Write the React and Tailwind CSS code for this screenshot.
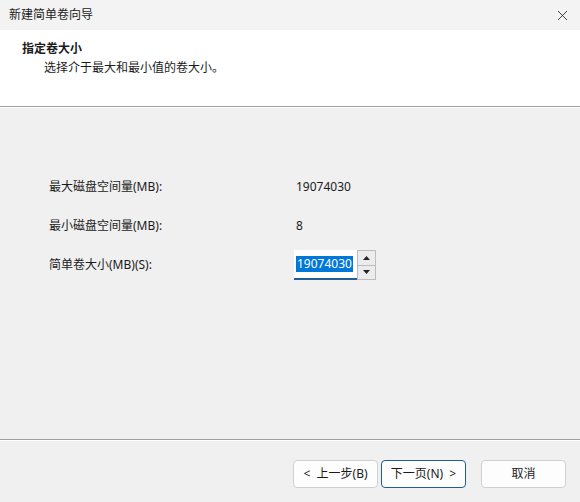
import { X } from "lucide-react";

const font = { fontFamily: '"Noto Sans", "Noto Sans CJK SC", sans-serif' };

function WizardButton({ children, primary }) {
  return (
    <button
      className={
        "h-[28px] w-[85px] rounded-[4px] bg-[#fdfdfd] text-[12px] text-[#1b1b1b] flex items-center justify-center whitespace-pre " +
        (primary ? "border border-[#1e5f8f]" : "border border-[#d0d0d0]")
      }
    >
      {children}
    </button>
  );
}

function SpinBox() {
  return (
    <div className="flex items-stretch h-[30px]">
      <div className="w-[63px] bg-white flex flex-col justify-center px-[2px] border-b-2 border-[#1f5f99]">
        <span className="bg-[#0078d7] text-white text-[12px] leading-[16px] w-fit px-[1px]">19074030</span>
      </div>
      <div className="w-[19px] flex flex-col border border-[#bcbcbc] bg-[#ececec]">
        <div className="flex-1 flex items-center justify-center border-b border-[#bcbcbc]">
          <svg width="7" height="4" viewBox="0 0 7 4"><path d="M3.5 0L7 4H0z" fill="#222" /></svg>
        </div>
        <div className="flex-1 flex items-center justify-center">
          <svg width="7" height="4" viewBox="0 0 7 4"><path d="M0 0h7L3.5 4z" fill="#222" /></svg>
        </div>
      </div>
    </div>
  );
}

export default function App() {
  const rows = [
    { label: "最大磁盘空间量(MB):", value: "19074030" },
    { label: "最小磁盘空间量(MB):", value: "8" },
  ];

  return (
    <div className="w-[580px] h-[502px] flex flex-col bg-[#f0f0f0] text-[#1b1b1b] overflow-hidden" style={font}>
      {/* Title bar */}
      <div className="h-[30px] bg-[#f3f3f3] flex items-center justify-between pl-[9px] pr-[9px] shrink-0">
        <span className="text-[12px]">新建简单卷向导</span>
        <X size={17} strokeWidth={1.2} className="text-[#222]" />
      </div>

      {/* Header */}
      <div className="h-[77px] bg-white border-b border-[#a0a0a0] pt-[11px] shrink-0">
        <div className="pl-[22px] text-[12px] font-bold leading-[16px]">指定卷大小</div>
        <div className="pl-[44px] text-[12px] leading-[16px] mt-[3px]">选择介于最大和最小值的卷大小。</div>
      </div>

      {/* Body */}
      <div className="flex-1 border-t border-white pl-[49px] pt-[71px]">
        <div className="flex flex-col gap-[23px]">
          {rows.map((r) => (
            <div key={r.label} className="flex items-center h-[16px] text-[12px]">
              <span className="w-[247px]">{r.label}</span>
              <span>{r.value}</span>
            </div>
          ))}
          <div className="flex items-center text-[12px] -mt-[7px]">
            <span className="w-[245px]">简单卷大小(MB)(S):</span>
            <SpinBox />
          </div>
        </div>
      </div>

      {/* Footer */}
      <div className="h-[63px] border-t border-[#a0a0a0] shrink-0">
        <div className="border-t border-white h-full flex items-start pt-[19px] pl-[293px] gap-[3px]">
          <WizardButton>{"<  上一步(B)"}</WizardButton>
          <WizardButton primary>{"下一页(N)  >"}</WizardButton>
          <div className="ml-[12px]">
            <WizardButton>取消</WizardButton>
          </div>
        </div>
      </div>
    </div>
  );
}
